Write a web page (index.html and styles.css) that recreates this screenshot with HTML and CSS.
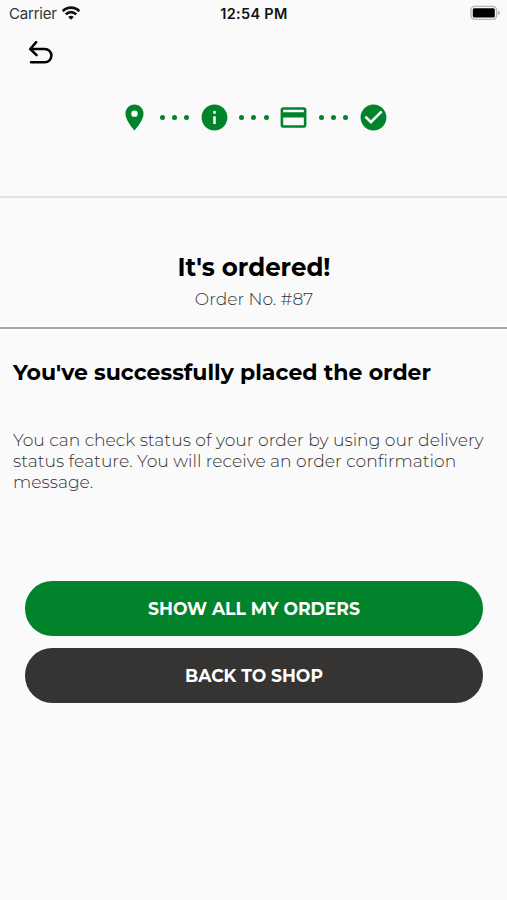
FILE: index.html
```html
<!DOCTYPE html>
<html lang="en">
<head>
  <meta charset="UTF-8">
  <meta name="viewport" content="width=device-width, initial-scale=1.0">
  <title>Order placed</title>
  <link rel="stylesheet" href="styles.css">
</head>
<body>
  <div class="status-bar">
    <div class="carrier">
      <span class="carrier-name">Carrier</span>
      <svg class="wifi" width="18" height="14" viewBox="0 0 18 14" fill="none" stroke="#111" stroke-width="2.7">
        <path d="M.6 5.2a11.8 11.8 0 0 1 16.8 0"/>
        <path d="M3.8 8.4a7.3 7.3 0 0 1 10.4 0"/>
        <path d="M6.2 10.9a3.9 3.9 0 0 1 5.6 0L9 13.8z" fill="#111" stroke="none"/>
      </svg>
    </div>
    <span class="time">12:54 PM</span>
    <svg class="battery" width="30" height="16" viewBox="0 0 30 16">
      <rect x="1" y="1.4" width="25.6" height="13" rx="3.8" fill="#fafafa" stroke="#b5b5b5" stroke-width="1.4"/>
      <rect x="2.8" y="3.3" width="22" height="9.2" rx="1.5" fill="#000"/>
      <path d="M28 5.6q2 .9 2 2.3t-2 2.3z" fill="#b5b5b5"/>
    </svg>
  </div>
  <header>
    <a class="back" href="#" aria-label="Back">
      <svg width="28" height="28" viewBox="0 0 28 28" fill="none" stroke="#000" stroke-width="2.5" stroke-linecap="round" stroke-linejoin="round">
        <path d="M10.2 3.2L4.2 10l6.4 6.2M4.6 10h14.2a6.6 6.6 0 0 1 0 13.2H5"/>
      </svg>
    </a>
    <div class="steps">
      <svg class="step" viewBox="0 0 24 24"><path d="M12 2C8.13 2 5 5.13 5 9c0 5.25 7 13 7 13s7-7.75 7-13c0-3.87-3.13-7-7-7zm0 9.5a2.5 2.5 0 0 1 0-5 2.5 2.5 0 0 1 0 5z"/></svg>
      <span class="dots"><i></i><i></i><i></i></span>
      <svg class="step" viewBox="0 0 24 24"><path d="M12 2C6.48 2 2 6.48 2 12s4.48 10 10 10 10-4.48 10-10S17.52 2 12 2zm1 15h-2v-6h2v6zm0-8h-2V7h2v2z"/></svg>
      <span class="dots"><i></i><i></i><i></i></span>
      <svg class="step" viewBox="0 0 24 24"><path d="M20 4H4c-1.11 0-1.99.89-1.99 2L2 18c0 1.11.89 2 2 2h16c1.11 0 2-.89 2-2V6c0-1.11-.89-2-2-2zm0 14H4v-6h16v6zm0-10H4V6h16v2z"/></svg>
      <span class="dots"><i></i><i></i><i></i></span>
      <svg class="step" viewBox="0 0 24 24"><path d="M12 2C6.48 2 2 6.48 2 12s4.48 10 10 10 10-4.48 10-10S17.52 2 12 2zm-2 15l-5-5 1.41-1.41L10 14.17l7.59-7.59L19 8l-9 9z"/></svg>
    </div>
  </header>
  <main>
    <section class="summary">
      <h1>It's ordered!</h1>
      <p>Order No. #87</p>
    </section>
    <section class="message">
      <h2>You've successfully placed the order</h2>
      <p>You can check status of your order by using our delivery status feature. You will receive an order confirmation message.</p>
    </section>
    <div class="actions">
      <button class="btn btn-orders">SHOW ALL MY ORDERS</button>
      <button class="btn btn-shop">BACK TO SHOP</button>
    </div>
  </main>
</body>
</html>
```
FILE: styles.css
```css
* {
  box-sizing: border-box;
}
body {
  margin: 0;
  min-height: 900px;
  background-color: #fafafa;
  color: #000;
  font-family: Montserrat, Inter, sans-serif;
}
h1, h2, p {
  margin: 0;
}
svg {
  display: block;
}
.status-bar {
  display: grid;
  grid-template-columns: 1fr auto 1fr;
  align-items: center;
  height: 28px;
  padding: 0 7px 0 9px;
  font-family: Inter, sans-serif;
  font-size: 15px;
}
.carrier {
  display: flex;
  align-items: center;
  gap: 6px;
  margin-top: -1px;
  color: #333;
}
.carrier-name {
  letter-spacing: -0.2px;
}
.wifi {
  margin-top: -2px;
  margin-left: -1px;
}
.time {
  margin: -1px 1px 0 0;
  font-weight: 600;
  font-size: 14.5px;
  letter-spacing: 0.3px;
  color: #111;
}
.battery {
  justify-self: end;
  margin-top: -2px;
}
header {
  height: 170px;
  padding-top: 11px;
  border-bottom: 2px solid #e2e2e2;
}
.back {
  display: block;
  width: 28px;
  margin-left: 26px;
}
.steps {
  display: flex;
  justify-content: center;
  align-items: center;
  margin-top: 34.5px;
  padding-left: 1px;
}
.step {
  width: 31px;
  height: 31px;
  fill: #00832b;
}
.dots {
  display: flex;
  justify-content: center;
  gap: 7.2px;
  width: 48.4px;
}
.dots i {
  width: 5px;
  height: 5px;
  border-radius: 50%;
  background-color: #00832b;
}
.summary {
  height: 131px;
  padding: 52px 0 0 1px;
  border-bottom: 2px solid #a8a8a8;
  text-align: center;
}
h1 {
  font-size: 24.5px;
  line-height: 34px;
  font-weight: 700;
}
.summary p {
  font-size: 17.1px;
  line-height: 30px;
  font-weight: 300;
  color: #333;
}
.message {
  padding: 28px 13px 0;
}
h2 {
  font-size: 22px;
  line-height: 32px;
  font-weight: 700;
}
.message p {
  margin-top: 40px;
  font-size: 17.17px;
  line-height: 21px;
  font-weight: 300;
  color: #333;
}
.actions {
  display: grid;
  gap: 12.5px;
  margin: 89px 24px 0 25px;
}
.btn {
  height: 54.5px;
  border: none;
  border-radius: 27.25px;
  color: #fff;
  font-family: inherit;
  font-size: 17.2px;
  font-weight: 700;
}
.btn-orders {
  background-color: #00832b;
}
.btn-shop {
  background-color: #363432;
}
```
